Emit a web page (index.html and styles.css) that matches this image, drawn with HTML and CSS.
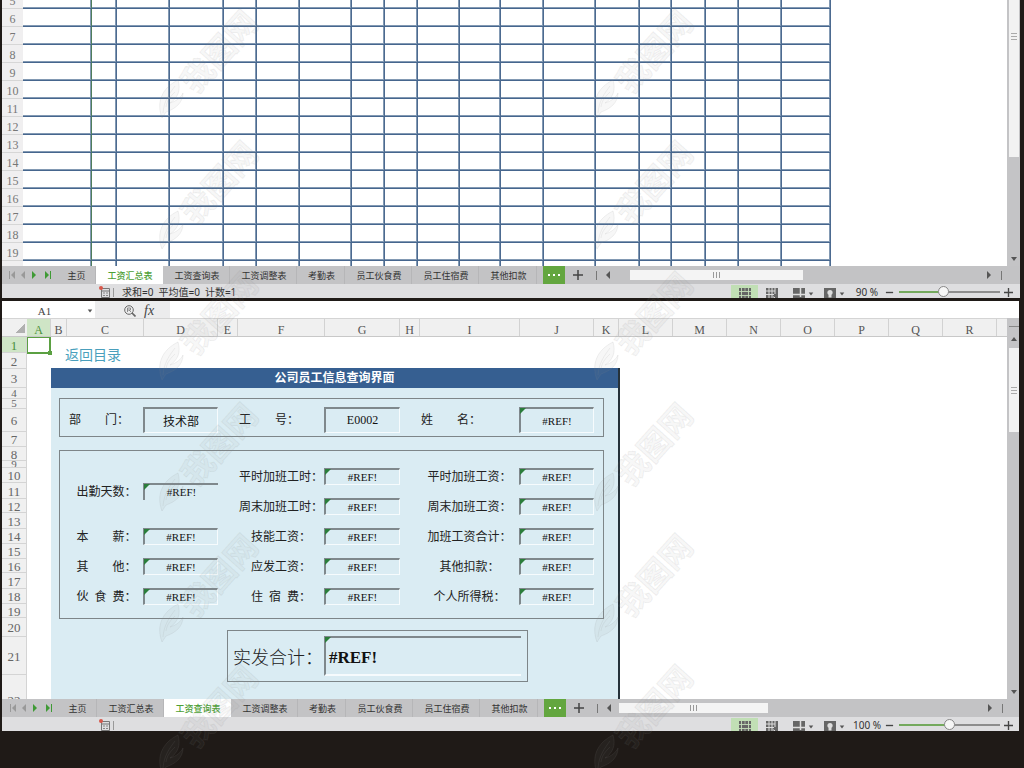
FILE: index.html
```html
<!DOCTYPE html>
<html lang="zh-CN">
<head>
<meta charset="utf-8">
<title>公司员工信息查询界面</title>
<link rel="stylesheet" href="styles.css">
</head>
<body>
<svg class="defs" aria-hidden="true">
  <symbol id="first" viewBox="0 0 8 8"><path d="M1 0h1v8H1zM7 0v8L3 4z" fill="currentColor"/></symbol>
  <symbol id="prev" viewBox="0 0 8 8"><path d="M6 0v8L2 4z" fill="currentColor"/></symbol>
  <symbol id="next" viewBox="0 0 8 8"><path d="M2 0v8l4-4z" fill="currentColor"/></symbol>
  <symbol id="last" viewBox="0 0 8 8"><path d="M1 0v8l4-4zM6 0h1v8H6z" fill="currentColor"/></symbol>
  <symbol id="up" viewBox="0 0 8 8"><path d="M1 6h6L4 2z" fill="currentColor"/></symbol>
  <symbol id="down" viewBox="0 0 8 8"><path d="M1 2h6L4 6z" fill="currentColor"/></symbol>
  <symbol id="plus" viewBox="0 0 10 10"><path d="M5 0v10M0 5h10" stroke="currentColor" stroke-width="1.5"/></symbol>
  <symbol id="minus" viewBox="0 0 10 10"><path d="M1 5h8" stroke="currentColor" stroke-width="1.5"/></symbol>
  <symbol id="dots" viewBox="0 0 14 4"><path d="M1 1h2v2H1zM6 1h2v2H6zM11 1h2v2h-2z" fill="#fff"/></symbol>
  <symbol id="gridview" viewBox="0 0 12 11"><path d="M0 0h12v11H0z" fill="#666"/><path d="M0 3.5h12M0 7.500h12M2.500 0v11M9.500 0v11" stroke="#c5dfba" stroke-width=".9"/><path d="M6 0v3M6 8v3" stroke="#c5dfba" stroke-width=".6"/></symbol>
  <symbol id="pageview" viewBox="0 0 12 11"><path d="M0 0h12v11H0z" fill="#666"/><path d="M0 3h9M0 6.500h8M3 0v11M6 0v8M9 0v6M5 9h3l2 2" fill="none" stroke="#ddd"/></symbol>
  <symbol id="splitview" viewBox="0 0 12 11"><path d="M0 0h12v11H0z" fill="#666"/><path d="M0 6.500h12M7.500 0v9" stroke="#ddd" stroke-width="1.500"/></symbol>
  <symbol id="bulb" viewBox="0 0 12 11"><path d="M0 0h12v11H0z" fill="#666"/><circle cx="6" cy="4.500" r="2.600" fill="#ddd"/><path d="M4.500 7h3v2.500h-3z" fill="#ddd"/></symbol>
  <symbol id="macro" viewBox="0 0 12 12"><path d="M2.500 2.500h8v9h-8zM2.500 5h8" fill="none" stroke="#777"/><path d="M4 7h2M7 7h2M4 9.500h2M7 9.500h2" stroke="#888"/><circle cx="2" cy="2" r="2" fill="#d8574a"/></symbol>
  <symbol id="lens" viewBox="0 0 12 12"><circle cx="5" cy="5" r="4.300" fill="none" stroke="#666"/><path d="M8 8l3.500 3.500" stroke="#666" stroke-width="1.700"/><path d="M3.500 7V3h3v2h-3M5 5l2 2" fill="none" stroke="#777" stroke-width=".8"/></symbol>
  <symbol id="mark" viewBox="0 0 110 120" overflow="visible">
    <g class="mark-shape">
      <text transform="translate(36 85) rotate(-48)">我图网</text>
      <path d="M2 108C-4 92 2 78 18 70C21 80 18 88 10 93C17 91 21 87 23 83C23 93 15 99 6 102ZM3 103C4 91 9 84 15 76M6 97C7 90 11 86 15 82"/>
    </g>
  </symbol>
</svg>

<main class="page">
  <section class="window summary">
    <div class="sheet">
      <div class="cells">
        <table class="ledger" id="ledger"></table>
      </div>
      <div class="vscroll">
        <div class="vthumb tall"></div>
        <svg class="arrow end"><use href="#down"/></svg>
      </div>
    </div>
    <div class="tabbar">
      <div class="tabnav">
        <button class="off" aria-label="首个"><svg><use href="#first"/></svg></button>
        <button class="off" aria-label="上一个"><svg><use href="#prev"/></svg></button>
        <button aria-label="下一个"><svg><use href="#next"/></svg></button>
        <button aria-label="末个"><svg><use href="#last"/></svg></button>
      </div>
      <nav class="tabs">
        <button class="t2">主页</button><button class="t5 active">工资汇总表</button><button class="t5">工资查询表</button><button class="t5">工资调整表</button><button class="t3">考勤表</button><button class="t5">员工伙食费</button><button class="t5">员工住宿费</button><button class="t4">其他扣款</button>
      </nav>
      <button class="more" aria-label="更多"><svg><use href="#dots"/></svg></button>
      <button class="add" aria-label="新建"><svg><use href="#plus"/></svg></button>
      <span class="bar"></span>
      <div class="hscroll">
        <svg class="arrow"><use href="#prev"/></svg>
        <div class="track"><div class="hthumb wide"></div></div>
        <svg class="arrow"><use href="#next"/></svg>
        <span class="bar"></span>
      </div>
    </div>
    <div class="status">
      <svg class="macro"><use href="#macro"/></svg><span class="bar thin"></span>
      <span class="stats">求和=0&ensp;平均值=0&ensp;计数=1</span>
      <div class="views">
        <button class="view on" aria-label="普通视图"><svg><use href="#gridview"/></svg></button>
        <button class="view" aria-label="分页预览"><svg><use href="#pageview"/></svg></button>
        <button class="view drop" aria-label="阅读布局"><svg><use href="#splitview"/></svg><svg class="caret"><use href="#down"/></svg></button>
        <button class="view drop" aria-label="护眼模式"><svg><use href="#bulb"/></svg><svg class="caret"><use href="#down"/></svg></button>
        <label class="percent" for="zoom1">90 %</label>
        <button class="step" aria-label="缩小"><svg><use href="#minus"/></svg></button>
        <input class="zoom z90" id="zoom1" type="range" min="0" max="100" value="43">
        <button class="step" aria-label="放大"><svg><use href="#plus"/></svg></button>
      </div>
    </div>
  </section>

  <section class="window query">
    <div class="formula">
      <div class="namebox"><input type="text" value="A1" aria-label="名称框"><svg class="caret"><use href="#down"/></svg></div>
      <div class="tools"><svg class="lens"><use href="#lens"/></svg><span class="fx">fx</span></div>
      <input class="entry" type="text" aria-label="编辑栏">
    </div>
    <div class="sheet">
      <div class="body">
        <div class="colheads" id="colheads"><span class="corner"></span></div>
        <div class="area">
          <div class="rowheads" id="rowheads"></div>
          <div class="canvas">
            <div class="cursor"></div>
            <a class="back" href="#">返回目录</a>
            <form class="form">
              <h1>公司员工信息查询界面</h1>
              <div class="group who">
                <label for="dept">部　　门：</label><input class="box" id="dept" value="技术部">
                <label for="num">工　　号：</label><input class="box code" id="num" value="E0002">
                <label for="name">姓　　名：</label><output class="box flag" id="name">#REF!</output>
              </div>
              <div class="group pay">
                <label class="two" for="days">出勤天数：</label><output class="box flag open two" id="days">#REF!</output>
                <label for="oh">平时加班工时：</label><output class="box flag" id="oh">#REF!</output>
                <label for="ow">平时加班工资：</label><output class="box flag" id="ow">#REF!</output>
                <label for="wh">周末加班工时：</label><output class="box flag" id="wh">#REF!</output>
                <label for="ww">周末加班工资：</label><output class="box flag" id="ww">#REF!</output>
                <label class="c" for="base">本　　薪：</label><output class="box flag" id="base">#REF!</output>
                <label for="skill">技能工资：</label><output class="box flag" id="skill">#REF!</output>
                <label for="osum">加班工资合计：</label><output class="box flag" id="osum">#REF!</output>
                <label class="c" for="other">其　　他：</label><output class="box flag" id="other">#REF!</output>
                <label for="gross">应发工资：</label><output class="box flag" id="gross">#REF!</output>
                <label for="cut">其他扣款：</label><output class="box flag" id="cut">#REF!</output>
                <label class="c" for="food">伙&ensp;食&ensp;费：</label><output class="box flag" id="food">#REF!</output>
                <label for="rent">住&ensp;宿&ensp;费：</label><output class="box flag" id="rent">#REF!</output>
                <label for="tax">个人所得税：</label><output class="box flag" id="tax">#REF!</output>
              </div>
              <div class="group total">
                <label for="net">实发合计：</label><output class="box flag" id="net">#REF!</output>
              </div>
            </form>
          </div>
        </div>
      </div>
      <div class="vscroll">
        <span class="split"></span>
        <svg class="arrow"><use href="#up"/></svg>
        <div class="vthumb short"></div>
        <svg class="arrow end"><use href="#down"/></svg>
      </div>
    </div>
    <div class="tabbar">
      <div class="tabnav">
        <button class="off" aria-label="首个"><svg><use href="#first"/></svg></button>
        <button class="off" aria-label="上一个"><svg><use href="#prev"/></svg></button>
        <button aria-label="下一个"><svg><use href="#next"/></svg></button>
        <button aria-label="末个"><svg><use href="#last"/></svg></button>
      </div>
      <nav class="tabs">
        <button class="t2">主页</button><button class="t5">工资汇总表</button><button class="t5 active">工资查询表</button><button class="t5">工资调整表</button><button class="t3">考勤表</button><button class="t5">员工伙食费</button><button class="t5">员工住宿费</button><button class="t4">其他扣款</button>
      </nav>
      <button class="more" aria-label="更多"><svg><use href="#dots"/></svg></button>
      <button class="add" aria-label="新建"><svg><use href="#plus"/></svg></button>
      <span class="bar"></span>
      <div class="hscroll">
        <svg class="arrow"><use href="#prev"/></svg>
        <div class="track"><div class="hthumb"></div></div>
        <svg class="arrow"><use href="#next"/></svg>
        <span class="bar"></span>
      </div>
    </div>
    <div class="status">
      <svg class="macro"><use href="#macro"/></svg><span class="bar thin"></span>
      <div class="views">
        <button class="view on" aria-label="普通视图"><svg><use href="#gridview"/></svg></button>
        <button class="view" aria-label="分页预览"><svg><use href="#pageview"/></svg></button>
        <button class="view drop" aria-label="阅读布局"><svg><use href="#splitview"/></svg><svg class="caret"><use href="#down"/></svg></button>
        <button class="view drop" aria-label="护眼模式"><svg><use href="#bulb"/></svg><svg class="caret"><use href="#down"/></svg></button>
        <label class="percent" for="zoom2">100 %</label>
        <button class="step" aria-label="缩小"><svg><use href="#minus"/></svg></button>
        <input class="zoom z100" id="zoom2" type="range" min="0" max="100" value="50">
        <button class="step" aria-label="放大"><svg><use href="#plus"/></svg></button>
      </div>
    </div>
  </section>
</main>
<svg class="marks" id="marks" aria-hidden="true"></svg>
<script src="app.js"></script>
</body>
</html>
```

FILE: styles.css
```css
* { box-sizing: border-box; }
body {
  margin: 0;
  min-height: 100vh;
  background: #1f1a17;
  font-family: "Liberation Sans", "Noto Sans CJK SC", sans-serif;
  color: #222;
}
button, input { font: inherit; color: inherit; border: 0; padding: 0; margin: 0; background: none; border-radius: 0; }
button { display: flex; align-items: center; justify-content: center; }
svg { display: block; flex: none; }
.defs { position: absolute; width: 0; height: 0; }

.page { display: flex; flex-direction: column; gap: 3px; padding: 0 5px 0 2px; }
.window { display: flex; flex-direction: column; background: #fff; }
.summary { margin-right: -1px; }
.sheet { display: flex; overflow: hidden; }
.summary .sheet { height: 266px; }
.query .sheet { height: 381px; }
.cells, .body { flex: 1; min-width: 0; overflow: hidden; }

/* salary ledger */
.ledger { margin-top: -9px; border-collapse: separate; border-spacing: 0; table-layout: fixed; width: 829px; }
.ledger tr { height: 18px; }
.ledger th, .ledger td { padding: 0; height: 18px; }
.ledger th {
  padding-top: 3px;
  background: #f0eff0;
  border-bottom: 1px solid #d6d6d6;
  color: #777;
  font: 12px/14px "Liberation Serif", serif;
}
.ledger td { border-right: 1px solid #4c6a90; border-bottom: 1px solid #46668e; box-shadow: inset -1px -1px 0 #8299b3; }
.ledger td:nth-child(2) { border-right-color: #4f7d5c; }

/* scroll bars */
.vscroll { width: 13px; background: #c4c4c6; display: flex; flex-direction: column; align-items: center; padding-left: 1px; }
.query .vscroll { width: 12px; }
.vthumb {
  width: 10px;
  background: linear-gradient(#aaa, #aaa) center calc(50% - 3px) / 6px 1px no-repeat,
    linear-gradient(#aaa, #aaa) center 50% / 6px 1px no-repeat,
    linear-gradient(#aaa, #aaa) center calc(50% + 3px) / 6px 1px no-repeat, #f2f2f2;
}
.tall { height: 157px; background-position: center 33px, center 36px, center 39px, 0 0; }
.short { height: 84px; margin-top: 5px; }
.arrow { width: 8px; height: 8px; color: #555; }
.end { margin-top: auto; margin-bottom: 3px; }
.split { width: 10px; height: 1px; background: #888; margin: 8px 0 8px; }

/* sheet tabs */
.tabbar { display: flex; align-items: center; height: 18px; background: #c3c3c5; }
.tabnav { display: flex; width: 54px; padding-left: 4px; color: #3f9a35; }
.tabnav button { width: 11px; }
.tabnav button:last-child { margin-left: 3px; }
.tabnav svg { width: 8px; height: 8px; }
.tabnav .off { color: #999; }
.query .tabnav { width: 55px; padding-left: 5px; }
.tabs { display: flex; height: 100%; }
.tabs button { border-right: 1px solid #b6b6b8; padding: 2px 0 0 2px; font-size: 9px; line-height: 16px; color: #333; white-space: nowrap; }
.tabs .active { background: #fff; color: #4da036; font-weight: 500; border-color: #fff; }
.t2 { width: 40px; }
.t3 { width: 48px; }
.t4 { width: 58px; }
.t5 { width: 67px; }
.more { width: 22px; height: 100%; margin-left: 6px; background: #63a63f; }
.more svg { width: 14px; height: 4px; }
.add { width: 26px; color: #444; }
.add svg { width: 10px; height: 10px; }
.bar { width: 1px; height: 9px; margin-left: 5px; background: #777; }
.hscroll { flex: 1; display: flex; align-items: center; padding: 0 18px 0 7px; }
.query .hscroll { padding-right: 16px; }
.track { flex: 1; padding: 0 10px 0 18px; }
.query .track { padding-left: 6px; }
.hthumb {
  width: 149px;
  height: 10px;
  background: linear-gradient(#999, #999) calc(50% - 3px) center / 1px 6px no-repeat,
    linear-gradient(#999, #999) 50% center / 1px 6px no-repeat,
    linear-gradient(#999, #999) calc(50% + 3px) center / 1px 6px no-repeat, #f4f4f4;
}
.wide { width: 173px; }
.hscroll .bar { margin-left: 8px; }

/* status bar */
.status { display: flex; align-items: center; height: 14px; padding: 0 0 0 97px; background: #dedee0; overflow: hidden; }
.macro { width: 12px; height: 12px; margin-top: 2px; }
.thin { margin: 3px 0 0 2px; background: #999; }
.stats { margin-left: 8px; padding-top: 2px; font: 10px/12px "Noto Sans", "Noto Sans CJK SC", sans-serif; color: #333; white-space: nowrap; }
.views { display: flex; align-items: center; height: 100%; margin-left: auto; padding: 2px 7px 0 0; }
.query .views { padding-right: 6px; }
.view { width: 27px; height: 14px; padding-top: 3px; }
.view svg { width: 12px; height: 11px; }
.view .caret { width: 6px; height: 6px; color: #555; margin: 0 0 0 3px; }
.on { background: #c1dfb5; }
.drop { width: 31px; }
.drop:nth-child(3) { margin-left: 3px; }
.percent { width: 34px; text-align: center; font: 10px/12px "Noto Sans", sans-serif; color: #333; white-space: nowrap; }
.step { width: 10px; color: #444; }
.step svg { width: 9px; height: 9px; }
.zoom { -webkit-appearance: none; appearance: none; width: 101px; height: 12px; margin: 0 3px 0 5px; }
.zoom::-webkit-slider-runnable-track { height: 2px; background: linear-gradient(90deg, #74a95d 45%, #8d8d8d 45%); }
.z100::-webkit-slider-runnable-track { background: linear-gradient(90deg, #74a95d 50%, #8d8d8d 50%); }
.zoom::-webkit-slider-thumb { -webkit-appearance: none; width: 11px; height: 11px; margin-top: -5px; border: 1px solid #888; border-radius: 50%; background: #f6f6f6; }

/* formula bar */
.formula { display: flex; height: 17px; background: #ececed; }
.namebox { display: flex; align-items: center; width: 93px; background: #fff; }
.namebox input { flex: 1; min-width: 0; padding-top: 3px; text-align: center; font: 11px/14px "Liberation Serif", serif; color: #444; }
.caret { width: 6px; height: 6px; margin: 3px 2px 0 0; color: #555; }
.tools { display: flex; align-items: center; gap: 8px; width: 75px; padding: 2px 0 0 29px; }
.lens { width: 12px; height: 12px; }
.fx { font: italic 14px/15px "Liberation Serif", serif; color: #444; }
.entry { flex: 1; background: #fff; }

/* headings */
.colheads { display: flex; height: 19px; background: #f0f0f0; border-top: 1px solid #d4d4d4; border-bottom: 1px solid #c8c8c8; overflow: hidden; }
.colheads span { flex: none; height: 100%; padding-top: 3px; border-right: 1px solid #d2d2d2; text-align: center; font: 12px/16px "Liberation Serif", serif; color: #555; }
.colheads .corner { width: 25px; background: linear-gradient(135deg, transparent 50%, #b0b0b0 50%) 14px 5px / 9px 9px no-repeat; border: 0; }
.colheads .sel, .rowheads .sel { background: #cfe5c6; color: #4a8f3a; }
.area { display: flex; }
.rowheads { width: 25px; background: #f0f0f0; flex: none; }
.rowheads span {
  display: flex; align-items: center; justify-content: center;
  padding-top: 2px;
  border-bottom: 1px solid #d4d4d4; border-right: 1px solid #d4d4d4;
  font: 13px/12px "Liberation Serif", serif; color: #666; overflow: hidden;
}
.rowheads .slim { padding-top: 0; font-size: 11px; line-height: 9px; }
.rowheads .last { align-items: flex-start; padding-top: 20px; }
.canvas { position: relative; flex: 1; padding-left: 24px; height: 362px; overflow: hidden; }
.cursor { position: absolute; left: -1px; top: -1px; width: 25px; height: 18px; border: 2px solid #5ba042; }
.cursor::after { content: ""; position: absolute; right: -3px; bottom: -3px; width: 4px; height: 4px; background: #5ba042; }
.back { display: block; height: 31px; padding: 4px 0 0 14px; font-size: 14px; line-height: 28px; color: #4a9fbc; text-decoration: none; }

/* enquiry form */
.form { width: 569px; height: 340px; border-right: 2px solid #26323a; background: #daecf3; }
.form h1 { margin: 0; height: 20px; padding-top: 1px; background: #365f91; color: #fff; font-size: 12px; line-height: 19px; text-align: center; }
.group { display: grid; margin-left: 8px; border: 1px solid #7d8588; align-items: center; }
.group label { padding-top: 1px; font-size: 12px; line-height: 16px; color: #222; white-space: nowrap; }
.who, .pay { width: 545px; grid-template-columns: 83px 75px 106px 76px 119px 75px; }
.who { height: 39px; margin-top: 10px; padding-top: 4px; }
.who label { padding-left: 21px; }
.who label:first-child { padding-left: 9px; }
.pay { height: 169px; margin-top: 13px; padding-top: 10px; grid-template-rows: repeat(5, 30px); align-content: start; }
.pay label { padding-left: 20px; text-align: center; }
.pay .c, .pay label.two { padding-left: 10px; }
.two { grid-row: span 2; }
.box {
  position: relative; display: block; width: 100%; min-width: 0; height: 17px;
  border: 1px solid #f6fbfd; border-top: 2px solid #7f888c; border-left: 2px solid #7f888c;
  font: 11px/15px "Liberation Serif", "Noto Sans CJK SC", serif; text-align: center; color: #111;
}
.who .box { height: 26px; line-height: 24px; }
.who input { padding-top: 1px; font-size: 12px; }
.open { border-right: 0; border-bottom: 0; }
.flag::before { content: ""; position: absolute; left: -1px; top: -1px; border: 3px solid; border-color: #2b7d3b transparent transparent #2b7d3b; }
.total { width: 301px; height: 52px; margin: 11px 0 0 176px; grid-template-columns: 96px 197px; }
.total label { padding: 3px 0 0 5px; font-size: 18px; line-height: 24px; font-weight: 300; }
.total .box { height: 40px; border-right: 0; border-bottom-width: 2px; padding-left: 3px; font-size: 17px; line-height: 39px; font-weight: bold; text-align: left; }

.marks { position: absolute; left: 0; top: 0; width: 100%; height: 100%; pointer-events: none; }
.mark-shape { font: bold 32px "Noto Sans CJK SC", sans-serif; fill: rgba(140, 140, 140, .07); stroke: rgba(140, 140, 140, .12); stroke-width: 1; }
```

FILE: app.js
```js
const ledgerCols = [21, 69, 25, 53, 54, 33, 43, 52, 33, 33, 42, 41, 43, 52, 44, 32, 34, 33, 43, 49];
let html = '<colgroup>' + ledgerCols.map(w => `<col style="width:${w}px">`).join('') + '</colgroup><tbody>';
for (let r = 5; r <= 20; r++) {
  html += `<tr><th scope="row">${r < 20 ? r : ''}</th>` + '<td></td>'.repeat(ledgerCols.length - 1) + '</tr>';
}
document.getElementById('ledger').innerHTML = html + '</tbody>';

const cols = { A: 24, B: 16, C: 77, D: 74, E: 20, F: 87, G: 75, H: 20, I: 100, J: 74, K: 25, L: 54, M: 54, N: 54, O: 54, P: 54, Q: 54, R: 54 };
document.getElementById('colheads').innerHTML += Object.entries(cols)
  .map(([n, w]) => `<span class="${n === 'A' ? 'sel' : ''}" style="width:${w}px">${n}</span>`).join('');

const rows = [16, 16, 19, 11, 10, 23, 15, 14, 7, 15, 16, 14, 16, 15, 15, 14, 16, 15, 14, 19, 38, 48];
const kind = (h, i) => i === 0 ? 'sel' : i === rows.length - 1 ? 'last' : h < 12 ? 'slim' : '';
document.getElementById('rowheads').innerHTML = rows
  .map((h, i) => `<span class="${kind(h, i)}" style="height:${h}px">${i + 1}</span>`).join('');

let marks = '';
for (const x of [160, 595]) {
  for (let y = 10; y < 768; y += 131) marks += `<use href="#mark" x="${x}" y="${y}" width="110" height="120"/>`;
}
document.getElementById('marks').innerHTML = marks;
```
